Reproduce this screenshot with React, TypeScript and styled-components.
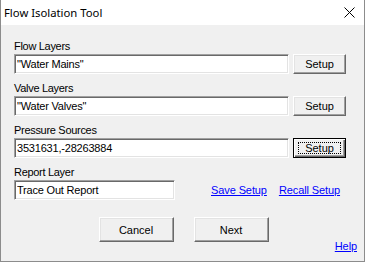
import React from "react";
import styled, { createGlobalStyle, css } from "styled-components";

const Global = createGlobalStyle`
  html, body { margin: 0; padding: 0; background: #ffffff; }
  body { font-family: "Liberation Sans", Arial, sans-serif; }
  * { box-sizing: border-box; }
`;

const Window = styled.div`
  width: 365px;
  height: 262px;
  border: 1px solid #8c8c8c;
  border-top: none;
  background: #f0f0f0;
  display: flex;
  flex-direction: column;
`;

const TitleBar = styled.div`
  height: 25px;
  flex: none;
  background: #ffffff;
  display: flex;
  align-items: center;
  justify-content: space-between;
  padding: 0 9px 0 3px;
  font-family: "Noto Sans", "Liberation Sans", sans-serif;
  font-size: 11.3px;
  color: #000;
`;

const CloseIcon = styled.svg`
  width: 11px;
  height: 11px;
  display: block;
`;

const Content = styled.div`
  flex: 1;
  display: flex;
  flex-direction: column;
  padding: 15px 7px 0 13px;
  font-size: 11px;
  color: #000;
`;

const Group = styled.div`
  display: flex;
  flex-direction: column;
  & + & {
    margin-top: 8px;
  }
`;

const Label = styled.div`
  line-height: 13px;
  height: 13px;
  margin-bottom: 1px;
  letter-spacing: -0.3px;
`;

const Row = styled.div`
  display: flex;
  align-items: center;
  gap: 4px;
`;

const TextBox = styled.input<{ $w: number }>`
  width: ${(p) => p.$w}px;
  height: 20px;
  margin: 0;
  padding: 0 2px 1px 2px;
  font-family: "Liberation Sans", Arial, sans-serif;
  font-size: 11px;
  letter-spacing: -0.2px;
  color: #000;
  background: #ffffff;
  border-style: solid;
  border-width: 1px;
  border-color: #a0a0a0 #ffffff #ffffff #a0a0a0;
  box-shadow: inset 1px 1px 0 #696969, inset -1px -1px 0 #e3e3e3;
  outline: none;
`;

const Button = styled.button<{ $w: number; $h: number; $focused?: boolean }>`
  width: ${(p) => p.$w}px;
  height: ${(p) => p.$h}px;
  margin: 0;
  padding: 0;
  font-family: "Liberation Sans", Arial, sans-serif;
  font-size: 11px;
  color: #000;
  background: #f0f0f0;
  border-style: solid;
  border-width: 1px;
  border-color: #ffffff #696969 #696969 #ffffff;
  box-shadow: inset -1px -1px 0 #a0a0a0, inset 1px 1px 0 #e3e3e3;
  display: flex;
  align-items: center;
  justify-content: center;
  position: relative;
  ${(p) =>
    p.$focused &&
    css`
      border-color: #000000;
      box-shadow: inset 1px 1px 0 #ffffff, inset -1px -1px 0 #696969,
        inset -2px -2px 0 #a0a0a0;
      &::after {
        content: "";
        position: absolute;
        inset: 3px 4px 3px 4px;
        border: 1px dotted #000;
      }
    `}
`;

const LinkRow = styled.div`
  display: flex;
  align-items: center;
`;

const Link = styled.a<{ $ml: number }>`
  margin-left: ${(p) => p.$ml}px;
  color: #0000ff;
  text-decoration: underline;
  font-size: 11px;
  line-height: 13px;
  letter-spacing: -0.1px;
  cursor: pointer;
`;

const ButtonRow = styled.div`
  display: flex;
  justify-content: center;
  gap: 20px;
  margin-top: 17px;
  padding-right: 4px;
`;

const HelpRow = styled.div`
  display: flex;
  justify-content: flex-end;
  margin-top: -2px;
`;

const fields = [
  { label: "Flow Layers", value: "\"Water Mains\"" },
  { label: "Valve Layers", value: "\"Water Valves\"" },
  { label: "Pressure Sources", value: "3531631,-28263884", focused: true },
];

export default function App() {
  return (
    <>
      <Global />
      <Window>
        <TitleBar>
          <span>Flow Isolation Tool</span>
          <CloseIcon viewBox="0 0 11 11">
            <path d="M0.5 0.5 L10.5 10.5 M10.5 0.5 L0.5 10.5" stroke="#000" strokeWidth="1" fill="none" />
          </CloseIcon>
        </TitleBar>
        <Content>
          {fields.map((f) => (
            <Group key={f.label}>
              <Label>{f.label}</Label>
              <Row>
                <TextBox $w={275} readOnly value={f.value} />
                <Button $w={53} $h={20} $focused={f.focused}>
                  Setup
                </Button>
              </Row>
            </Group>
          ))}
          <Group>
            <Label>Report Layer</Label>
            <LinkRow>
              <TextBox $w={161} readOnly value="Trace Out Report" />
              <Link $ml={36}>Save Setup</Link>
              <Link $ml={12}>Recall Setup</Link>
            </LinkRow>
          </Group>
          <ButtonRow>
            <Button $w={75} $h={25}>Cancel</Button>
            <Button $w={75} $h={25}>Next</Button>
          </ButtonRow>
          <HelpRow>
            <Link $ml={0}>Help</Link>
          </HelpRow>
        </Content>
      </Window>
    </>
  );
}
